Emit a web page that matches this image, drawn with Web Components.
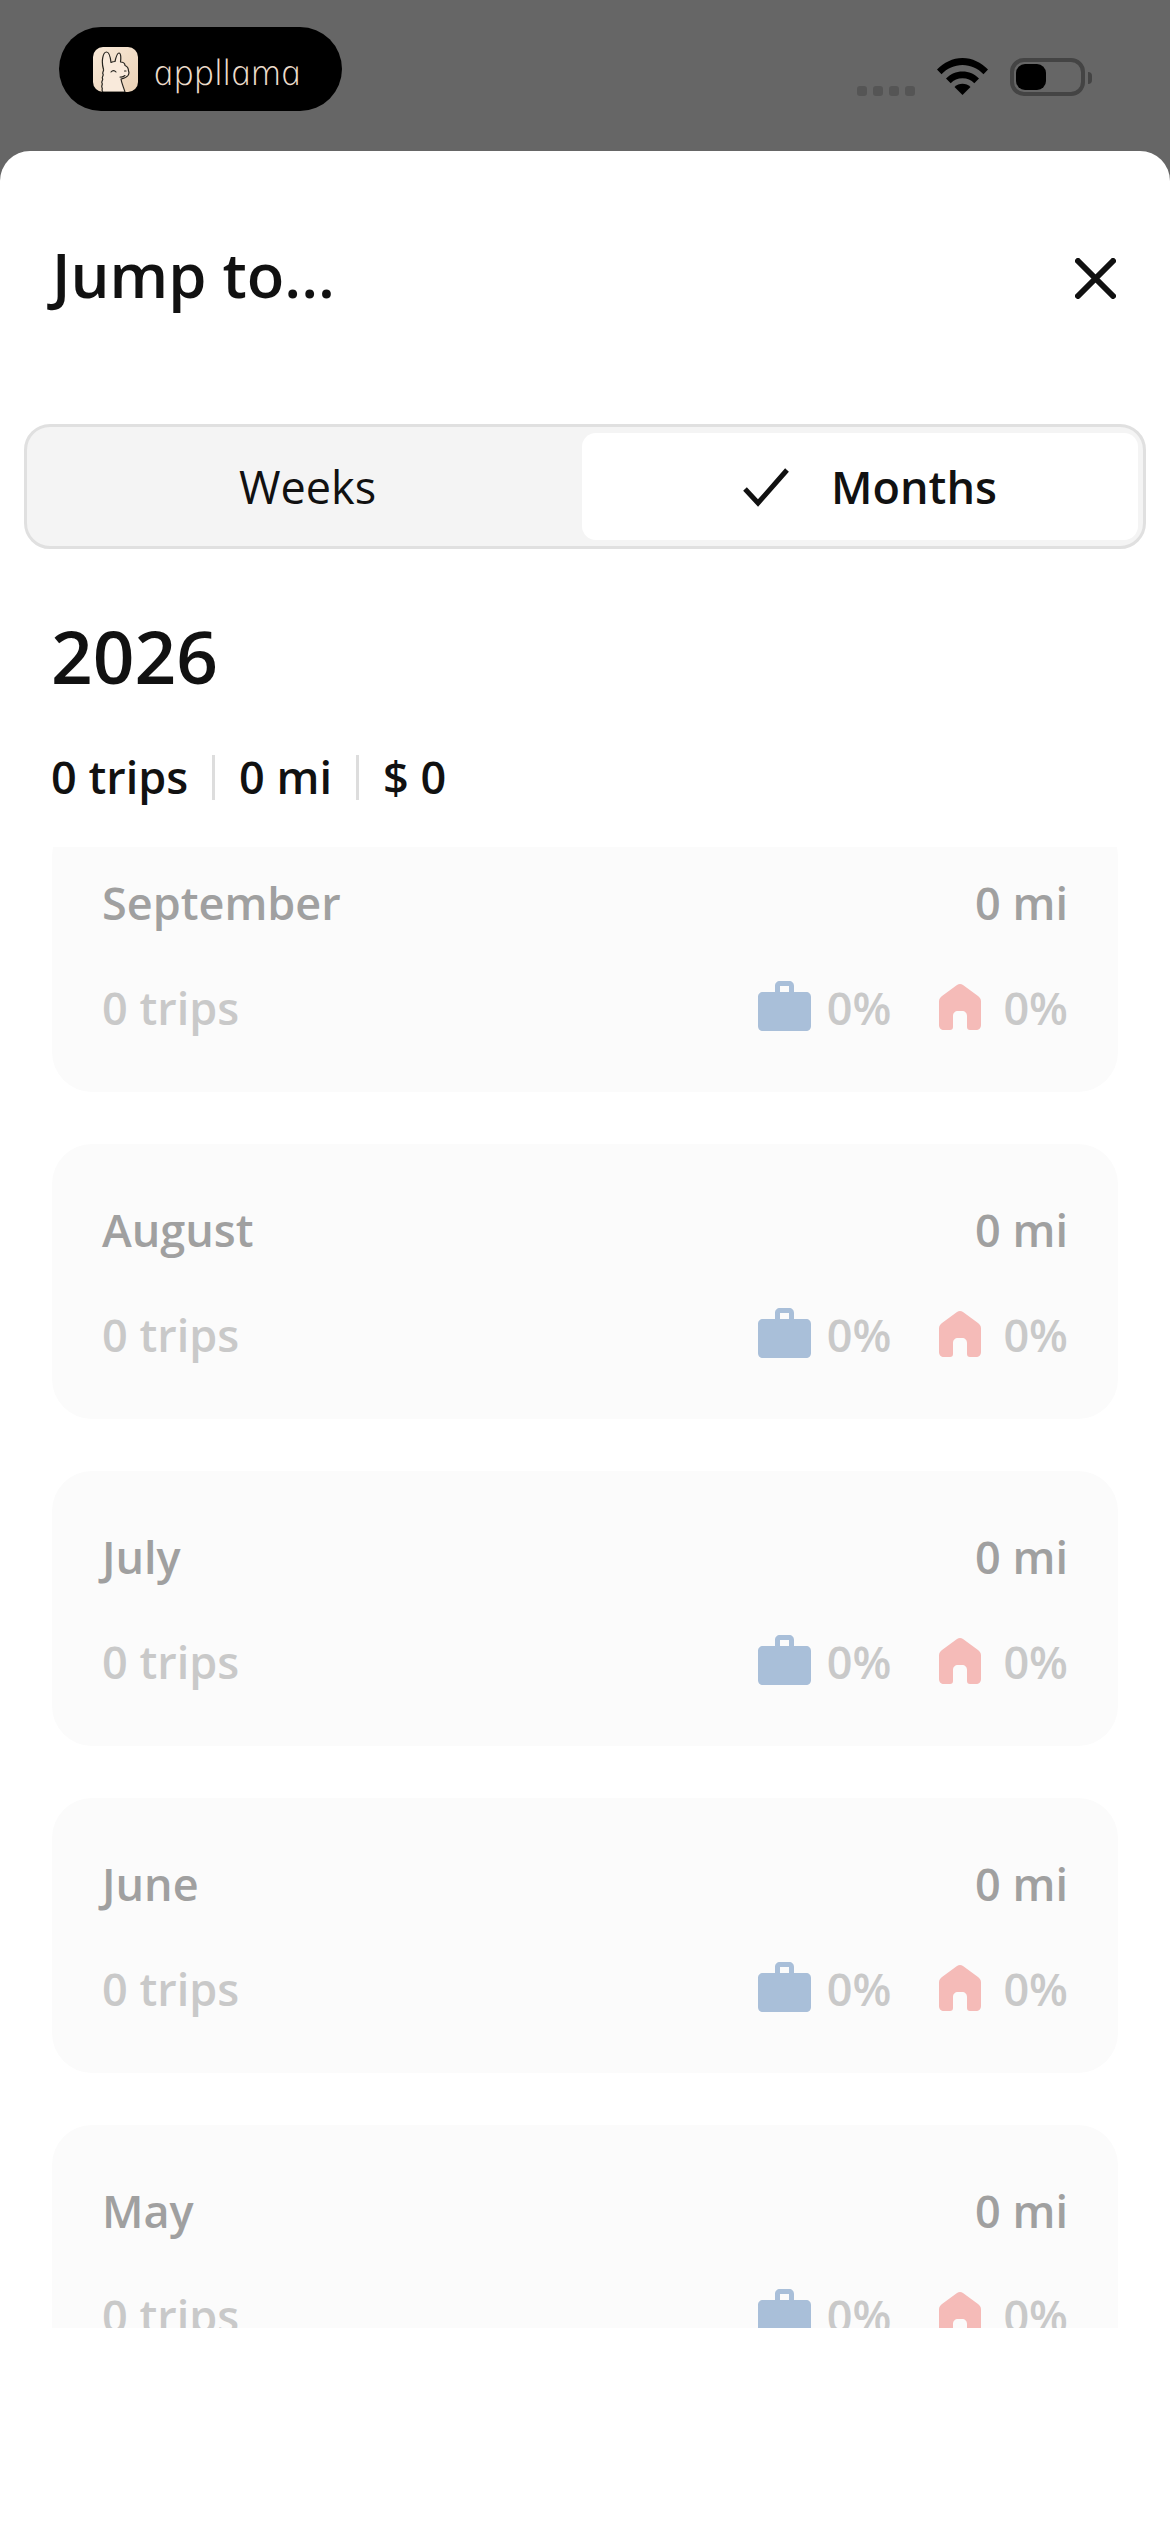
<!doctype html>
<html lang="en"><head><meta charset="utf-8"><title>Jump to</title>
<style>
html,body{margin:0;padding:0;height:2532px;overflow:hidden;background:#fff;font-family:"Open Sans",sans-serif}
</style></head>
<body>
<trip-screen></trip-screen>
<script>
function def(name, css, html){
  customElements.define(name, class extends HTMLElement{
    connectedCallback(){
      if(this.shadowRoot) return;
      const r=this.attachShadow({mode:'open'});
      const data={};
      for(const a of this.attributes) data[a.name]=a.value;
      r.innerHTML='<style>'+css+'</style>'+(typeof html==='function'?html(data):html);
    }
  });
}
def('app-badge',`
:host{display:flex;align-items:center;width:283px;height:84px;background:#000;border-radius:42px;box-sizing:border-box;padding-left:34px}
svg{display:block;width:45px;height:45px;flex:none}
span{display:block;margin-left:15px;font:italic 300 35px/1 "Open Sans",sans-serif;color:#ecdccb;letter-spacing:.4px;transform:skewX(12deg);position:relative;top:2px;white-space:nowrap}
`,`<svg viewBox="0 0 45 45">
<defs><linearGradient id="g" x1="0" y1="0" x2="1" y2="1"><stop offset="0" stop-color="#f8e9d8"/><stop offset="1" stop-color="#ebd2b6"/></linearGradient></defs>
<rect width="45" height="45" rx="10" fill="url(#g)"/>
<path d="M10 45c-2-1.500 0-3-1-4.500s1-3 0-4.500 1.500-3 .5-4.500 1.500-3 .5-4.500 1-3 .5-4.500C8 14 10 5 13.500 5c3 0 4 6 4.500 10.500 1.500-.8 3-1 4-1C23 10 24.500 6 26 6c2 0 2 5 1.500 9 2.500 0 4.500 1.500 4.500 3.500 2.500 1 3.500 3 3.500 5.500.5 1 .5 3-.5 4.500-1.500 2-4 3-7 3.500.5 4 2.500 8 4 13z" fill="#f9eadb" stroke="#26241f" stroke-width="1.200" stroke-linejoin="round"/>
<path d="M18 25c1.500-1.800 3.500-1.800 5 0M27 30c2 .3 3.500-.2 5-1.500M31.500 24h1.500" fill="none" stroke="#26241f" stroke-width="1.100" stroke-linecap="round"/>
</svg><span>appllama</span>`);
def('status-icons',`
:host{display:flex;align-items:flex-start;position:relative;width:235px;height:38px}
.dots{display:flex;gap:6px;margin-top:28px}
.dots i{width:10px;height:10px;border-radius:3px;background:#555}
svg{display:block;margin-left:22px;width:51px;height:37px}
.bat{margin-left:22px;width:75px;height:38px;box-sizing:border-box;border:4px solid #444;border-radius:14px;padding:2px}
.bat b{display:block;width:30px;height:26px;background:#000;border-radius:9px}
.nub{width:4px;height:12px;margin:14px 0 0 3px;background:#444;border-radius:0 6px 6px 0}
`,`<div class="dots"><i></i><i></i><i></i><i></i></div>
<svg viewBox="0 0 51 37"><path d="M0 11.500C7 4.500 15.500 0 25.500 0S44 4.500 51 11.500l-4.500 4.700C41 10.500 33.500 7 25.500 7S10 10.500 4.500 16.200z" fill="#000"/><path d="M9 20.500c4.500-4.500 10-7 16.500-7s12 2.500 16.500 7l-4.700 4.800c-3.200-3.200-7-5-11.800-5s-8.600 1.800-11.800 5z" fill="#000"/><path d="M17.500 29c2.200-2.200 5-3.300 8-3.300s5.800 1.100 8 3.300l-8 8z" fill="#000"/></svg>
<div class="bat"><b></b></div><div class="nub"></div>`);
def('status-bar',`
:host{display:flex;justify-content:space-between;align-items:flex-start;height:151px;background:#666;box-sizing:border-box;padding:27px 78px 0 59px}
status-icons{margin-top:31px}
`,`<app-badge></app-badge><status-icons></status-icons>`);
def('sheet-header',`
:host{display:flex;justify-content:space-between;align-items:center;height:273px;box-sizing:border-box;padding:0 52px 19px 52px;color:#111}
h1{margin:0 0 6px;font:600 61.500px/1 "Open Sans",sans-serif;letter-spacing:0}
svg{display:block;width:41px;height:41px;margin-right:2px}
`,`<h1>Jump to...</h1><svg viewBox="0 0 41 41"><path d="M3 3l35 35M38 3L3 38" stroke="#111" stroke-width="6" stroke-linecap="round" fill="none"/></svg>`);
def('seg-control',`
:host{display:grid;grid-template-columns:1fr 556px;height:125px;box-sizing:border-box;margin:0 24px;padding:6px 5px 6px 6px;background:#f4f4f4;border:3px solid #e0e0e0;border-radius:26px;color:#111;font:400 45px/1 "Open Sans",sans-serif}
div{display:flex;align-items:center;justify-content:center}
.on{background:#fff;border-radius:14px;font-weight:600;gap:42px;padding-left:20px;box-sizing:border-box}
svg{width:46px;height:40px;display:block}
`,`<div>Weeks</div><div class="on"><svg viewBox="0 0 46 40"><path d="M2 22l13 14L44 3" fill="none" stroke="#111" stroke-width="5"/></svg><span>Months</span></div>`);
def('year-summary',`
:host{display:block;height:298px;box-sizing:border-box;padding:63px 51px 0;color:#111}
h2{margin:0;font:600 73px/88px "Open Sans",sans-serif}
.s{display:flex;align-items:center;margin-top:47px;font:600 45px/60px "Open Sans",sans-serif}
i{display:block;width:3px;height:45px;background:#ddd;margin:0 24px}
`,`<h2>2026</h2><div class="s"><span>0 trips</span><i></i><span>0 mi</span><i></i><span>$ 0</span></div>`);
def('bag-icon',`:host{display:block;width:53px;height:50px;margin-top:-4px}svg{display:block}`,
`<svg width="53" height="50" viewBox="0 0 53 50"><path fill-rule="evenodd" d="M17 11V5c0-3 2-5 5-5h9c3 0 5 2 5 5v6h12c3 0 5 2 5 5v29c0 3-2 5-5 5H5c-3 0-5-2-5-5V16c0-3 2-5 5-5zm5-6v6h9V5z" fill="#a9bfd9"/></svg>`);
def('home-icon',`:host{display:block;width:42px;height:46px;margin-top:-3px}svg{display:block}`,
`<svg width="42" height="46" viewBox="0 0 42 46"><path d="M18 1c2-1.300 4-1.300 6 0l15 11c2 1.500 3 3 3 5.500V41c0 3-2 5-5 5h-6c-2 0-3-1-3-3V32c0-3-2-5-5-5h-4c-3 0-5 2-5 5v11c0 2-1 3-3 3H5c-3 0-5-2-5-5V17.500C0 15 1 13.500 3 12z" fill="#f5bbb8"/></svg>`);
def('month-card',`
:host{display:block;height:275px;box-sizing:border-box;padding:53px 50px 0;background:#fbfbfb;border-radius:40px}
.r{display:flex;justify-content:space-between;align-items:center;height:66px;font:600 45px/66px "Open Sans",sans-serif;color:#a0a0a0}
.b{display:flex;justify-content:space-between;align-items:center;height:66px;margin-top:39px;font:600 45px/66px "Open Sans",sans-serif;color:#c9c9c9}
.p{display:flex;align-items:center}
.p span{margin-left:16px}
home-icon{margin-left:48px}
.p home-icon+span{margin-left:22px}
`,d=>`<div class="r"><span>${d.month}</span><span>0 mi</span></div>
<div class="b"><span>0 trips</span><div class="p"><bag-icon></bag-icon><span>0%</span><home-icon></home-icon><span>0%</span></div></div>`);
def('month-list',`
:host{display:block;height:1481px;overflow:hidden;box-sizing:border-box;padding:0 52px}
.in{display:flex;flex-direction:column;gap:52px;margin-top:-30px}
`,`<div class="in"><month-card month="September"></month-card><month-card month="August"></month-card><month-card month="July"></month-card><month-card month="June"></month-card><month-card month="May"></month-card></div>`);
def('jump-sheet',`
:host{display:block;height:2381px;background:#fff;border-radius:30px 30px 0 0}
`,`<sheet-header></sheet-header><seg-control></seg-control><year-summary></year-summary><month-list></month-list>`);
def('trip-screen',`
:host{display:block;height:2532px;background:#666;overflow:hidden}
`,`<status-bar></status-bar><jump-sheet></jump-sheet>`);
</script>
</body></html>
